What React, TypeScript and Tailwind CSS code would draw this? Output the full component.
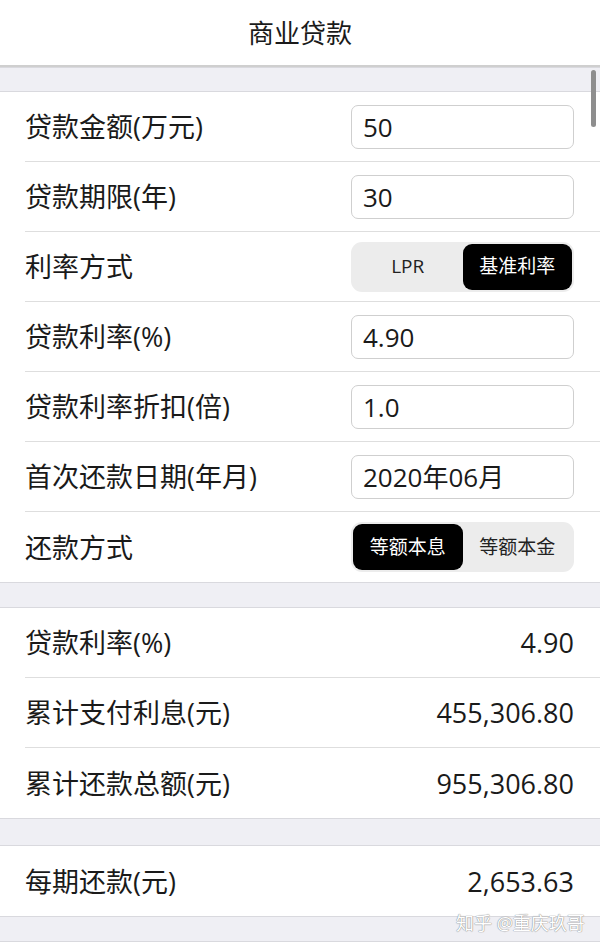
import React from "react";

const font = { fontFamily: '"Open Sans", "Noto Sans CJK SC", sans-serif' };

function Band({ h = "h-[26px]" }: { h?: string }) {
  return <div className={`${h} bg-[#efeff4] border-y border-[#d9d9de]`} />;
}

function Row({ label, last, children }: { label: string; last?: boolean; children: React.ReactNode }) {
  return (
    <div className="pl-[25px] bg-white">
      <div className={`h-[70px] flex items-center justify-between pr-[26px] ${last ? "" : "border-b border-[#dedede]"}`}>
        <span className="text-[27px] text-[#1a1a1a] leading-none">{label}</span>
        {children}
      </div>
    </div>
  );
}

function Field({ value }: { value: string }) {
  return (
    <div className="w-[223px] h-[44px] border border-[#cfcfcf] rounded-[7px] flex items-center px-[11px] text-[26px] text-[#1a1a1a] leading-none">
      {value}
    </div>
  );
}

function Segment({ options, active }: { options: string[]; active: number }) {
  return (
    <div className="w-[223px] h-[50px] bg-[#ececec] rounded-[11px] p-[2px] flex">
      {options.map((o, i) => (
        <div
          key={o}
          className={`flex-1 flex items-center justify-center rounded-[9px] text-[19px] leading-none ${
            i === active ? "bg-black text-white" : "text-[#222]"
          }`}
        >
          {o}
        </div>
      ))}
    </div>
  );
}

function Value({ v }: { v: string }) {
  return <span className="text-[27px] text-[#1a1a1a] leading-none">{v}</span>;
}

export default function App() {
  return (
    <div className="relative w-[600px] h-[947px] overflow-hidden bg-white" style={font}>
      {/* Title bar */}
      <div className="h-[67px] flex items-center justify-center border-b-2 border-[#cfcfcf]">
        <h1 className="text-[26px] text-[#1a1a1a] leading-none">商业贷款</h1>
      </div>

      <Band h="h-[25px]" />
      <Row label="贷款金额(万元)"><Field value="50" /></Row>
      <Row label="贷款期限(年)"><Field value="30" /></Row>
      <Row label="利率方式"><Segment options={["LPR", "基准利率"]} active={1} /></Row>
      <Row label="贷款利率(%)"><Field value="4.90" /></Row>
      <Row label="贷款利率折扣(倍)"><Field value="1.0" /></Row>
      <Row label="首次还款日期(年月)"><Field value="2020年06月" /></Row>
      <Row label="还款方式" last><Segment options={["等额本息", "等额本金"]} active={0} /></Row>

      <Band h="h-[26px]" />
      <Row label="贷款利率(%)"><Value v="4.90" /></Row>
      <Row label="累计支付利息(元)"><Value v="455,306.80" /></Row>
      <Row label="累计还款总额(元)" last><Value v="955,306.80" /></Row>

      <Band h="h-[28px]" />
      <Row label="每期还款(元)" last><Value v="2,653.63" /></Row>
      <Band h="h-[26px]" />

      {/* scrollbar */}
      <div className="absolute left-[591px] top-[70px] w-[5px] h-[57px] rounded-full bg-[#8e8e8e]" />

      {/* watermark */}
      <div
        className="absolute left-[456px] top-[914px] text-[18px] text-white leading-none"
        style={{ textShadow: "0 0 1px #888, 0 0 1px #888" }}
      >
        知乎 @重庆玖哥
      </div>
    </div>
  );
}
